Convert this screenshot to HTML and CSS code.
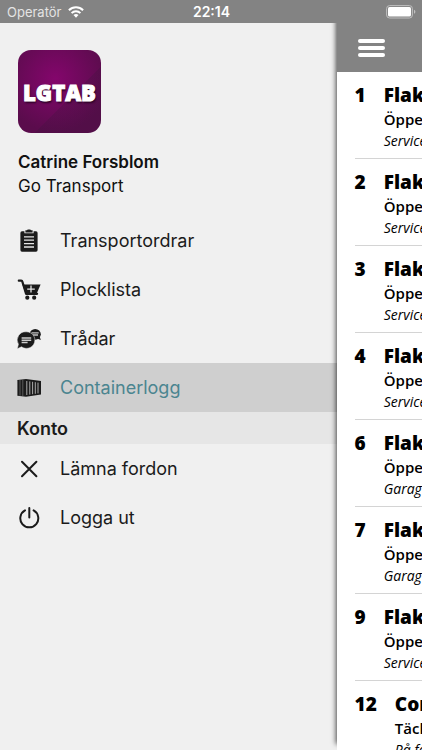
FILE: index.html
```html
<!DOCTYPE html>
<html lang="sv">
<head>
<meta charset="utf-8">
<meta name="viewport" content="width=device-width, initial-scale=1">
<title>LGTAB</title>
<link rel="stylesheet" href="styles.css">
</head>
<body>
<div class="app">
  <header class="status">
    <span class="carrier">Operatör
      <svg class="wifi" viewBox="0 0 16 12" aria-hidden="true"><g fill="none" stroke="#fff" stroke-width="2"><path d="M.9 4.3a10 10 0 0 1 14.2 0"/><path d="M3.6 7.1a6.2 6.2 0 0 1 8.8 0"/></g><path fill="#fff" d="M5.5 9.1a3.6 3.6 0 0 1 5 0L8 11.7z"/></svg>
    </span>
    <span class="clock">22:14</span>
    <svg class="battery" viewBox="0 0 30 14" aria-hidden="true"><rect x=".6" y=".6" width="25.8" height="12.4" rx="3" fill="none" stroke="#c0c0c0"/><rect x="2" y="2" width="23" height="9.6" rx="1.6" fill="#fff"/><path d="M28 4.8q1.4.6 1.4 2t-1.4 2z" fill="#c0c0c0"/></svg>
  </header>

  <div class="body">
    <aside class="drawer">
      <div class="profile">
        <div class="logo"><span>LGTAB</span></div>
        <strong class="name">Catrine Forsblom</strong>
        <span class="company">Go Transport</span>
      </div>
      <nav>
        <a class="item" href="#orders">
          <svg class="icon" viewBox="0 0 24 24" aria-hidden="true"><path fill="#1b1b1b" d="M5 2.300h2.400v2h9.200v-2H19q1.600 0 1.600 1.600v17.200q0 1.600-1.600 1.600H5q-1.600 0-1.600-1.600V3.900Q3.400 2.300 5 2.300z"/><path fill="#1b1b1b" d="M8.400 1.300H10q.2-.9 1-.9h2q.8 0 1 .9h1.600v2.300H8.400z"/><path stroke="#e6e6e6" stroke-width="1.300" d="M7 7.800h10M7 11.200h10M7 14.600h10M7 18h10"/></svg>
          Transportordrar</a>
        <a class="item" href="#picklist">
          <svg class="icon" viewBox="0 0 24 24" aria-hidden="true"><path d="M1.800 2.700h2.400q1 0 1.300 1.500l3.600 11.600h11" fill="none" stroke="#1b1b1b" stroke-width="2.200" stroke-linejoin="round" stroke-linecap="round"/><path fill="#1b1b1b" d="M5.400 6.500h18.200l-4 9.300H8.700z"/><path stroke="#e6e6e6" stroke-width="1.300" d="M14 7.600v7M10.200 11.100h7.600"/><circle cx="10.300" cy="19.700" r="2.100" fill="#1b1b1b"/><circle cx="17.200" cy="19.700" r="2.100" fill="#1b1b1b"/></svg>
          Plocklista</a>
        <a class="item" href="#threads">
          <svg class="icon" viewBox="0 0 24 24" aria-hidden="true"><ellipse cx="18.200" cy="7.300" rx="5.600" ry="5.400" fill="#1b1b1b"/><path fill="#1b1b1b" d="M20 11.500l3.800 1.500-1.300-4z"/><path stroke="#c4c4c4" stroke-width="1.300" d="M14.500 5.800h7.200M16 8h5"/><path fill="#1b1b1b" stroke="#f0f0f0" stroke-width=".5" d="M9.400 4.800a8.400 8.300 0 1 1-4.900 15L.3 21.800l1.100-4.500A8.400 8.300 0 0 1 9.400 4.800z"/><path stroke="#ccc" stroke-width="1.500" d="M4.600 11h9.600M4.600 13.300h9.600M4.600 15.600h6"/></svg>
          Trådar</a>
        <a class="item selected" href="#containers" aria-current="page">
          <svg class="icon" viewBox="0 0 24 24" aria-hidden="true"><path fill="#1b1b1b" d="M.4 4l8.600-1 15 2v13.500l-15 2.200-8.600-1z"/><path stroke="#777" stroke-width=".7" d="M3 4v15.600M5.800 3.800v16.200"/><path stroke="#aaa" stroke-width="1" d="M9.800 5v14M12.800 5.400v13.200M15.600 5.800v12.400M18.300 6.200v11.600M21 6.600v10.800"/></svg>
          Containerlogg</a>
        <h2 class="section">Konto</h2>
        <a class="item" href="#leave">
          <svg class="icon" viewBox="0 0 24 24" aria-hidden="true"><path d="M5 4.800l14.400 14.400M19.400 4.800L5 19.200" fill="none" stroke="#1b1b1b" stroke-width="2" stroke-linecap="round"/></svg>
          Lämna fordon</a>
        <a class="item" href="#logout">
          <svg class="icon" viewBox="0 0 24 24" aria-hidden="true"><path d="M12.300 1.900v9.600M8 4.400a9 9 0 1 0 8.600 0" fill="none" stroke="#1b1b1b" stroke-width="2" stroke-linecap="round"/></svg>
          Logga ut</a>
      </nav>
    </aside>

    <main class="page">
      <div class="toolbar">
        <button class="menu" type="button" aria-label="Meny"><i></i><i></i><i></i></button>
      </div>
      <ol class="list">
        <li><b class="num">1</b><div class="info"><h3>Flak</h3><p>Öppen</p><em>Service</em></div></li>
        <li><b class="num">2</b><div class="info"><h3>Flak</h3><p>Öppen</p><em>Service</em></div></li>
        <li><b class="num">3</b><div class="info"><h3>Flak</h3><p>Öppen</p><em>Service</em></div></li>
        <li><b class="num">4</b><div class="info"><h3>Flak</h3><p>Öppen</p><em>Service</em></div></li>
        <li><b class="num">6</b><div class="info"><h3>Flak</h3><p>Öppen</p><em>Garage</em></div></li>
        <li><b class="num">7</b><div class="info"><h3>Flak</h3><p>Öppen</p><em>Garage</em></div></li>
        <li><b class="num">9</b><div class="info"><h3>Flak</h3><p>Öppen</p><em>Service</em></div></li>
        <li><b class="num">12</b><div class="info"><h3>Container</h3><p>Täckt</p><em>På fordon</em></div></li>
      </ol>
    </main>
  </div>
</div>
</body>
</html>
```

FILE: styles.css
```css
* { box-sizing: border-box; }

body {
  margin: 0;
  background: #f0f0f0;
  color: #1b1b1b;
  font-family: Inter, "Liberation Sans", sans-serif;
}

.app {
  display: flex;
  flex-direction: column;
  height: 100vh;
  overflow: hidden;
}

.status {
  display: grid;
  grid-template-columns: 1fr auto 1fr;
  align-items: center;
  flex: none;
  height: 23px;
  padding: 0 6px 0 7px;
  background: #838383;
  color: #fff;
  font-size: 14px;
  z-index: 1;
}

.carrier {
  display: flex;
  align-items: center;
  gap: 6px;
  color: #e4e4e4;
  font-size: 13px;
}

.wifi { width: 16px; height: 12px; }
.clock { font-weight: 600; }
.battery { width: 30px; height: 14px; justify-self: end; }

.body {
  display: flex;
  flex: 1;
  min-height: 0;
}

.drawer {
  flex: 0 0 calc(80% - 1px);
  background: #f0f0f0;
}

.profile {
  display: flex;
  flex-direction: column;
  padding: 27px 18px 18px;
  color: #111;
  font-size: 17px;
  line-height: 24px;
}

.logo {
  display: grid;
  place-items: center;
  width: 83px;
  height: 83px;
  margin-bottom: 17px;
  border-radius: 13px;
  background:
    linear-gradient(135deg, transparent 60%, rgba(60, 20, 60, .25) 60%),
    radial-gradient(circle at 45% 35%, #84066c, #5a0c4c 75%);
  color: #fff;
  font: 800 22px "Open Sans", sans-serif;
  -webkit-text-stroke: 1px #fff;
  text-shadow: 1px 2px 2px #2c0326;
}

.name { font-weight: 600; }

.item {
  display: flex;
  align-items: center;
  gap: 19px;
  height: 49px;
  padding: 0 17px;
  color: #1b1b1b;
  font-size: 18px;
  text-decoration: none;
}

.selected { background: #cfcfcf; color: #4b8590; }
.icon { flex: none; width: 24px; height: 24px; }

.section {
  margin: 0;
  padding: 2px 17px 0;
  background: #e6e6e6;
  font-size: 18px;
  font-weight: 600;
  line-height: 30px;
}

.page {
  flex: 1;
  min-width: 0;
  background: #fff;
  box-shadow: -1px -6px 5px rgba(0, 0, 0, .7);
  color: #000;
  font-family: "Open Sans", "Noto Sans", sans-serif;
  white-space: nowrap;
}

.toolbar {
  display: flex;
  align-items: center;
  height: 49px;
  padding-left: 21px;
  background: #838383;
}

.menu {
  display: flex;
  flex-direction: column;
  gap: 3px;
  padding: 0;
  border: 0;
  background: none;
}

.menu i {
  width: 27px;
  height: 4px;
  border-radius: 2px;
  background: #fff;
}

.list {
  margin: 0;
  padding: 0 0 0 18px;
  list-style: none;
  overflow: hidden;
}

.list li {
  display: flex;
  gap: 18px;
  height: 87px;
  padding-top: 10px;
  border-bottom: 1px solid #d4d4d4;
}

.num, .list h3 {
  margin: 0;
  font-size: 19px;
  font-weight: 800;
  line-height: 26px;
}

.list p {
  margin: 0;
  font-size: 15px;
  font-weight: 600;
  line-height: 22px;
}

.list em {
  display: block;
  font-size: 14px;
  line-height: 22px;
}
```
